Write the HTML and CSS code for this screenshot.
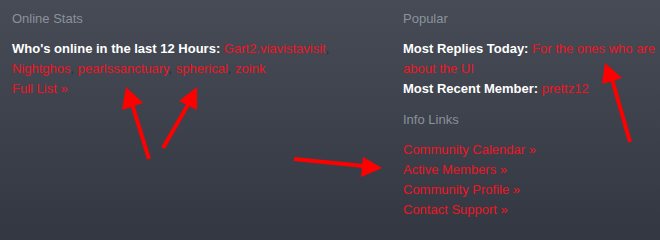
FILE: index.html
```html
<!DOCTYPE html>
<html>
<head>
<meta charset="utf-8">
<link rel="stylesheet" href="styles.css">
</head>
<body>
<div class="stats">
  <section class="col">
    <h3 class="col-title">Online Stats</h3>
    <div class="col-body">
      <p class="row"><strong>Who's online in the last 12 Hours:</strong> <a href="#">Gart2.viavistavisit</a>, <a href="#">Nightghos</a>, <a href="#">pearlssanctuary</a>, <a href="#">spherical</a>, <a href="#">zoink</a></p>
      <p class="row"><a href="#">Full List »</a></p>
    </div>
  </section>
  <section class="col">
    <h3 class="col-title">Popular</h3>
    <div class="col-body">
      <p class="row"><strong>Most Replies Today:</strong> <a href="#">For the ones who are about the UI</a></p>
      <p class="row"><strong>Most Recent Member:</strong> <a href="#">prettz12</a></p>
    </div>
    <h3 class="col-title sub">Info Links</h3>
    <div class="col-body">
      <p class="row"><a href="#">Community Calendar »</a></p>
      <p class="row"><a href="#">Active Members »</a></p>
      <p class="row"><a href="#">Community Profile »</a></p>
      <p class="row"><a href="#">Contact Support »</a></p>
    </div>
  </section>
</div>
<svg class="arrows" width="660" height="230" viewBox="0 0 660 230">
  <g fill="#ff0000" stroke="#ff0000" stroke-width="4" stroke-linecap="butt">
    <line x1="149" y1="159" x2="132" y2="104"/>
    <polygon stroke="none" points="126,87 122,110 143,103"/>
    <line x1="163" y1="148" x2="189" y2="103"/>
    <polygon stroke="none" points="197,87 179,101 197,110"/>
    <line x1="294" y1="159" x2="364" y2="166"/>
    <polygon stroke="none" points="382,168 363,157 361,177"/>
    <line x1="630" y1="142" x2="612" y2="79"/>
    <polygon stroke="none" points="605,63 602,84 622,78"/>
  </g>
</svg>
</body>
</html>
```

FILE: styles.css
```css
html {
  margin: 0;
  padding: 0;
  background: #343843;
  overflow: hidden;
}
body {
  margin: 0;
  padding: 0;
  width: 660px;
  height: 230px;
  overflow: hidden;
  position: relative;
  background: linear-gradient(to bottom, #464b56 0%, #3d424d 50%, #343843 100%);
  font-family: "Liberation Sans", Arial, sans-serif;
  font-size: 13px;
  color: #2a2d33;
}
.stats {
  display: grid;
  grid-template-columns: 360px 257px;
  column-gap: 31px;
  padding: 10px 0 0 12px;
}
.col-title {
  margin: 0;
  font-size: 13px;
  font-weight: normal;
  line-height: 18px;
  color: #8c9299;
}
.col-title.sub {
  margin-top: 12px;
}
.col-body {
  padding-top: 11px;
}
.row {
  margin: 0;
  line-height: 20px;
}
.row strong {
  color: #ffffff;
  font-weight: bold;
}
.row a {
  color: #ee1522;
  text-decoration: none;
}
.arrows {
  position: absolute;
  left: 0;
  top: 0;
  pointer-events: none;
}
```
